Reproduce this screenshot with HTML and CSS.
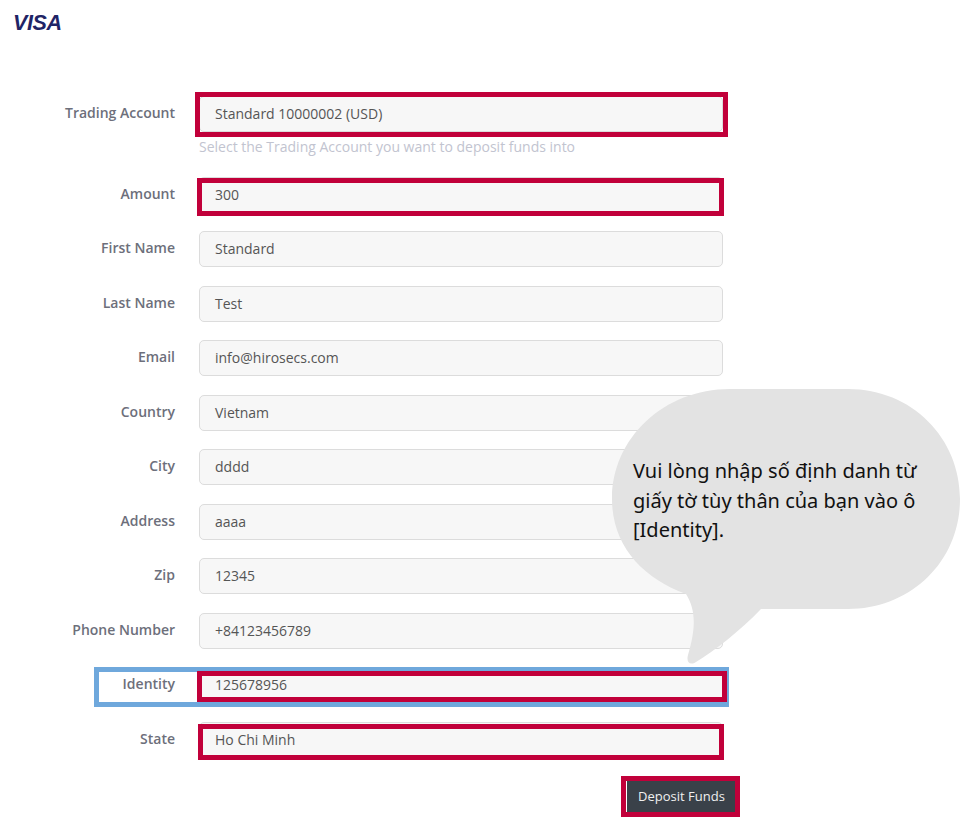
FILE: index.html
```html
<!DOCTYPE html>
<html lang="vi">
<head>
<meta charset="utf-8">
<title>Deposit Funds</title>
<link rel="stylesheet" href="styles.css">
</head>
<body>
<header class="brand"><span class="visa">VISA</span></header>
<form class="form">
  <div class="row row-help">
    <div class="label">Trading Account</div>
    <div class="control"><div class="field">Standard 10000002 (USD)</div><div class="help">Select the Trading Account you want to deposit funds into</div></div>
  </div>
  <div class="row"><div class="label">Amount</div><div class="control"><div class="field">300</div></div></div>
  <div class="row"><div class="label">First Name</div><div class="control"><div class="field">Standard</div></div></div>
  <div class="row"><div class="label">Last Name</div><div class="control"><div class="field">Test</div></div></div>
  <div class="row"><div class="label">Email</div><div class="control"><div class="field">info@hirosecs.com</div></div></div>
  <div class="row"><div class="label">Country</div><div class="control"><div class="field">Vietnam</div></div></div>
  <div class="row"><div class="label">City</div><div class="control"><div class="field">dddd</div></div></div>
  <div class="row"><div class="label">Address</div><div class="control"><div class="field">aaaa</div></div></div>
  <div class="row"><div class="label">Zip</div><div class="control"><div class="field">12345</div></div></div>
  <div class="row"><div class="label">Phone Number</div><div class="control"><div class="field">+84123456789</div></div></div>
  <div class="row"><div class="label">Identity</div><div class="control"><div class="field">125678956</div></div></div>
  <div class="row"><div class="label">State</div><div class="control"><div class="field">Ho Chi Minh</div></div></div>
  <div class="actions"><button type="button" class="submit">Deposit Funds</button></div>
</form>

<div class="mark mark-account"></div>
<div class="mark mark-amount"></div>
<div class="mark mark-blue"></div>
<div class="mark mark-identity"></div>
<div class="mark mark-state"></div>
<div class="mark mark-button"></div>

<aside class="bubble">
  <svg class="bubble-shape" width="349" height="282" viewBox="0 0 349 282" aria-hidden="true">
    <path d="M118 1 H236 C300 1 348 50 348 111 C348 174 298 221 236 221 H149 C128 243 102 263 84 274 C78 278 74 274 76 267 C84 240 84 222 74 206 C30 190 0 157 0 111 C0 50 52 1 118 1 Z" fill="#e3e3e3"/>
  </svg>
  <p class="bubble-text">Vui lòng nhập số định danh từ giấy tờ tùy thân của bạn vào ô [Identity].</p>
</aside>
</body>
</html>
```
FILE: styles.css
```css
html, body {
  margin: 0;
  padding: 0;
  background: #fff;
}
body {
  width: 971px;
  height: 833px;
  position: relative;
  overflow: hidden;
  font-family: "Open Sans", "Noto Sans", sans-serif;
  font-size: 14px;
  color: #555;
}
.brand {
  height: 96px;
  padding-left: 13px;
  box-sizing: border-box;
}
.visa {
  display: block;
  padding-top: 9px;
  font-family: "Liberation Sans", sans-serif;
  font-size: 21.5px;
  line-height: 28px;
  font-weight: 700;
  font-style: italic;
  letter-spacing: -0.4px;
  color: #1f2466;
}
.form {
  display: flex;
  flex-direction: column;
  gap: 18.5px;
  width: 723px;
}
.row {
  display: grid;
  grid-template-columns: 175px 524px;
  column-gap: 24px;
}
.row-help {
  margin-bottom: 0;
}
.label {
  height: 34px;
  line-height: 34px;
  text-align: right;
  font-weight: 600;
  color: #6d6f7b;
}
.field {
  height: 36px;
  line-height: 34px;
  box-sizing: border-box;
  padding: 0 15px;
  background: #f7f7f7;
  border: 1px solid #dcdcdc;
  border-radius: 5px;
}
.help {
  height: 26px;
  line-height: 30px;
  color: #c2c4d0;
}
.actions {
  display: flex;
  justify-content: flex-end;
  margin-top: 4.5px;
  margin-right: -13px;
}
.submit {
  width: 109px;
  height: 31px;
  padding: 0;
  border: 0;
  background: #3a4149;
  color: #f0f0f0;
  font-family: inherit;
  font-size: 13px;
}
.mark {
  position: absolute;
  box-sizing: border-box;
  border: 5px solid #c1003a;
}
.mark-account { left: 195px; top: 92px; width: 533px; height: 45px; }
.mark-amount { left: 197px; top: 178px; width: 527px; height: 38px; }
.mark-blue { left: 94px; top: 667px; width: 635px; height: 40px; border-color: #6fa8dc; }
.mark-identity { left: 197px; top: 671px; width: 530px; height: 31px; }
.mark-state { left: 198px; top: 724px; width: 526px; height: 36px; }
.mark-button { left: 621px; top: 776px; width: 119px; height: 41px; }
.bubble {
  position: absolute;
  left: 612px;
  top: 388px;
  width: 349px;
  height: 282px;
}
.bubble-shape {
  display: block;
}
.bubble-text {
  position: absolute;
  left: 21px;
  top: 68px;
  width: 320px;
  margin: 0;
  font-family: "Noto Sans", sans-serif;
  font-size: 20px;
  line-height: 29.5px;
  color: #111;
}
```
